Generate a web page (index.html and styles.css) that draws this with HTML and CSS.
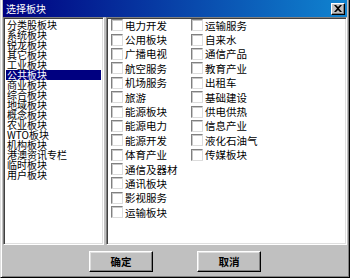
FILE: index.html
```html
<!DOCTYPE html>
<html lang="zh">
<head>
  <meta charset="UTF-8">
  <title>选择板块</title>
  <link rel="stylesheet" href="styles.css">
</head>
<body>
  <div class="window">
    <div class="titlebar">
      <span class="title">选择板块</span>
      <span class="close">
        <svg width="8" height="7" viewBox="0 0 8 7"><path d="M0 0h2l2 2 2-2h2L5 3.5 8 7H6L4 5 2 7H0l3-3.5z" fill="#000"/></svg>
      </span>
    </div>

    <div class="content">
      <ul class="list">
        <li>分类股板块</li>
        <li>系统板块</li>
        <li>锐龙板块</li>
        <li>其它板块</li>
        <li>工业板块</li>
        <li class="selected">公共板块</li>
        <li>商业板块</li>
        <li>综合板块</li>
        <li>地域板块</li>
        <li>概念板块</li>
        <li>农业板块</li>
        <li>WTO板块</li>
        <li>机构板块</li>
        <li>港澳资讯专栏</li>
        <li>临时板块</li>
        <li>用户板块</li>
      </ul>

      <div class="panel">
        <div class="col">
          <label class="check"><span class="box"></span>电力开发</label>
          <label class="check"><span class="box"></span>公用板块</label>
          <label class="check"><span class="box"></span>广播电视</label>
          <label class="check"><span class="box"></span>航空服务</label>
          <label class="check"><span class="box"></span>机场服务</label>
          <label class="check"><span class="box"></span>旅游</label>
          <label class="check"><span class="box"></span>能源板块</label>
          <label class="check"><span class="box"></span>能源电力</label>
          <label class="check"><span class="box"></span>能源开发</label>
          <label class="check"><span class="box"></span>体育产业</label>
          <label class="check"><span class="box"></span>通信及器材</label>
          <label class="check"><span class="box"></span>通讯板块</label>
          <label class="check"><span class="box"></span>影视服务</label>
          <label class="check"><span class="box"></span>运输板块</label>
        </div>
        <div class="col">
          <label class="check"><span class="box"></span>运输服务</label>
          <label class="check"><span class="box"></span>自来水</label>
          <label class="check"><span class="box"></span>通信产品</label>
          <label class="check"><span class="box"></span>教育产业</label>
          <label class="check"><span class="box"></span>出租车</label>
          <label class="check"><span class="box"></span>基础建设</label>
          <label class="check"><span class="box"></span>供电供热</label>
          <label class="check"><span class="box"></span>信息产业</label>
          <label class="check"><span class="box"></span>液化石油气</label>
          <label class="check"><span class="box"></span>传媒板块</label>
        </div>
      </div>
    </div>

    <div class="footer">
      <button class="btn">确定</button>
      <button class="btn">取消</button>
    </div>
  </div>
</body>
</html>
```

FILE: styles.css
```css
body {
  margin: 0;
  font-family: "Noto Sans CJK SC", "DejaVu Sans", sans-serif;
  font-size: 10px;
  background: #c0c0c0;
}

.window {
  width: 350px;
  height: 278px;
  box-sizing: border-box;
  background: #c0c0c0;
  padding: 0 2px 2px 2px;
  border-left: 1px solid #dfdfdf;
  border-right: 1px solid #000;
  border-bottom: 1px solid #000;
  box-shadow: inset 1px 0 #fff, inset -1px -1px #808080;
}

.titlebar {
  height: 17px;
  display: flex;
  align-items: center;
  padding: 0 2px 0 3px;
  background: linear-gradient(to right, #000080, #1084d0);
  color: #fff;
}

.title {
  font-size: 10px;
  line-height: 17px;
}

.close {
  margin-left: auto;
  width: 14px;
  height: 12px;
  box-sizing: border-box;
  background: #c0c0c0;
  display: flex;
  align-items: center;
  justify-content: center;
  border-top: 1px solid #fff;
  border-left: 1px solid #fff;
  border-right: 1px solid #000;
  border-bottom: 1px solid #000;
  box-shadow: inset -1px -1px #808080;
}

.content {
  display: flex;
  gap: 2px;
  height: 228px;
}

.list,
.panel {
  box-sizing: border-box;
  height: 228px;
  background: #fff;
  border-top: 1px solid #808080;
  border-left: 1px solid #808080;
  border-right: 1px solid #fff;
  border-bottom: 1px solid #fff;
  box-shadow: inset 1px 1px #404040, inset -1px -1px #dfdfdf;
}

.list {
  width: 101px;
  margin: 0;
  padding: 2px 2px 0 2px;
  list-style: none;
}

.list li {
  height: 10px;
  line-height: 10px;
  padding-left: 1px;
  white-space: nowrap;
  color: #000;
}

.list li.selected {
  background: #000080;
  color: #fff;
}

.panel {
  width: 241px;
  display: flex;
  padding: 0 0 0 4px;
}

.col {
  width: 80px;
  display: flex;
  flex-direction: column;
}

.check {
  height: 14.4px;
  display: flex;
  align-items: center;
  gap: 2px;
  white-space: nowrap;
  font-size: 10.5px;
}

.box {
  width: 12px;
  height: 12px;
  box-sizing: border-box;
  background: #fff;
  border-top: 1px solid #808080;
  border-left: 1px solid #808080;
  border-right: 1px solid #dcdcdc;
  border-bottom: 1px solid #dcdcdc;
  box-shadow: inset 1px 1px #c8c8c8;
}

.footer {
  display: flex;
  justify-content: center;
  gap: 44px;
  padding-top: 6px;
}

.btn {
  width: 64px;
  height: 21px;
  box-sizing: border-box;
  background: #c0c0c0;
  font-family: inherit;
  font-size: 10.5px;
  font-weight: bold;
  color: #000;
  padding: 0;
  border-top: 1px solid #fff;
  border-left: 1px solid #fff;
  border-right: 1px solid #000;
  border-bottom: 1px solid #000;
  box-shadow: inset -1px -1px #808080, inset 1px 1px #dfdfdf;
}
```
